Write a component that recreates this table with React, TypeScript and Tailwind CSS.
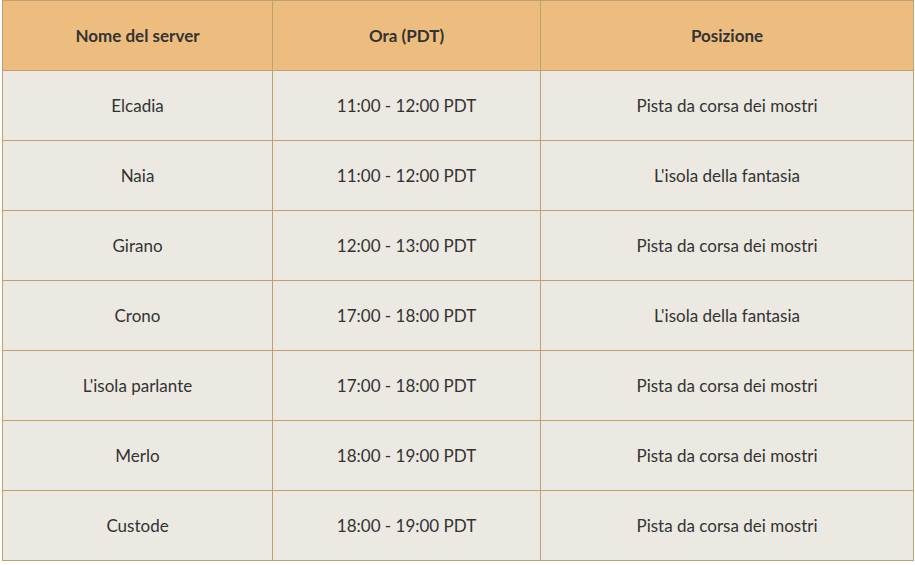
const rows = [
  ["Elcadia", "11:00 - 12:00 PDT", "Pista da corsa dei mostri"],
  ["Naia", "11:00 - 12:00 PDT", "L'isola della fantasia"],
  ["Girano", "12:00 - 13:00 PDT", "Pista da corsa dei mostri"],
  ["Crono", "17:00 - 18:00 PDT", "L'isola della fantasia"],
  ["L'isola parlante", "17:00 - 18:00 PDT", "Pista da corsa dei mostri"],
  ["Merlo", "18:00 - 19:00 PDT", "Pista da corsa dei mostri"],
  ["Custode", "18:00 - 19:00 PDT", "Pista da corsa dei mostri"],
];

export default function App() {
  return (
    <div className="bg-white min-h-screen pl-[2px] pr-[1px] font-['Lato',sans-serif] text-[17px] text-[#333]">
      <table className="w-full border-collapse table-fixed">
        <colgroup>
          <col className="w-[270px]" />
          <col className="w-[268px]" />
          <col />
        </colgroup>
        <thead>
          <tr className="bg-[#edbd80] h-[70px]">
            {["Nome del server", "Ora (PDT)", "Posizione"].map((h) => (
              <th key={h} className="border border-[#c0a06e] font-bold text-center p-0">
                {h}
              </th>
            ))}
          </tr>
        </thead>
        <tbody>
          {rows.map((r, i) => (
            <tr key={i} className="bg-[#ece9e2] h-[70px]">
              {r.map((c, j) => (
                <td key={j} className="border border-[#c0a06e] text-center p-0">
                  {c}
                </td>
              ))}
            </tr>
          ))}
        </tbody>
      </table>
    </div>
  );
}
